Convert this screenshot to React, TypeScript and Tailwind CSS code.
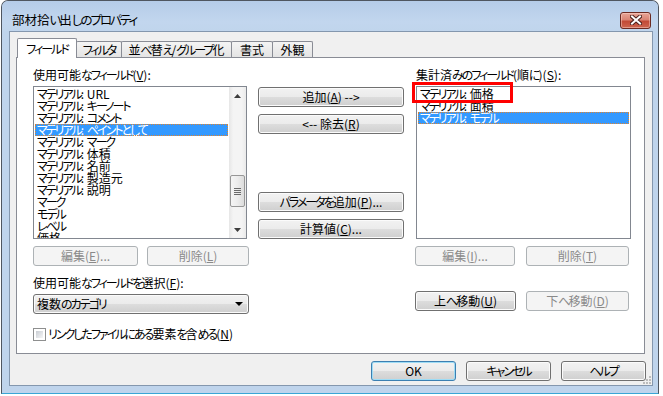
import React from "react";

const KANA = /[\u3041-\u30ff\uff61-\uff9f]/;

function T({ s }: { s: string }) {
  const parts: React.ReactNode[] = [];
  let buf = "";
  let isK: boolean | null = null;
  const flush = () => {
    if (!buf) return;
    parts.push(
      isK ? (
        <span key={parts.length} className="tracking-[-2px]">
          {buf}
        </span>
      ) : (
        <span key={parts.length}>{buf}</span>
      )
    );
    buf = "";
  };
  for (const ch of s) {
    const k = KANA.test(ch);
    if (isK !== null && k !== isK) flush();
    isK = k;
    buf += ch;
  }
  flush();
  return <>{parts}</>;
}

const U = ({ c }: { c: string }) => (
  <span className="underline decoration-1 underline-offset-[1px]">{c}</span>
);

type BtnProps = {
  children: React.ReactNode;
  className?: string;
  disabled?: boolean;
  primary?: boolean;
};

function Btn({ children, className = "", disabled = false, primary = false }: BtnProps) {
  let look =
    "border-[#707070] text-black bg-[linear-gradient(180deg,#f2f2f2_0%,#ebebeb_50%,#dddddd_50%,#cfcfcf_100%)] shadow-[inset_0_0_0_1px_#fbfbfb]";
  if (disabled) look = "border-[#adb2b5] text-[#8a8a8a] bg-[#f4f4f4]";
  if (primary)
    look =
      "border-[#3c7fb1] text-black bg-[linear-gradient(180deg,#f2f2f2_0%,#ebebeb_50%,#dddddd_50%,#cfcfcf_100%)] shadow-[inset_0_0_0_1px_#9edcf5]";
  return (
    <div
      className={`h-[20px] shrink-0 flex items-center justify-center rounded-[3px] border text-[12px] leading-[14px] whitespace-nowrap ${look} ${className}`}
    >
      {children}
    </div>
  );
}

function Tab({ s, className = "" }: { s: string; className?: string }) {
  return (
    <div
      className={`-ml-px h-[16px] flex items-center justify-center border border-b-0 border-[#898c95] rounded-t-[2px] bg-[linear-gradient(180deg,#f4f4f4_0%,#e4e4e4_100%)] leading-[14px] whitespace-nowrap ${className}`}
    >
      <T s={s} />
    </div>
  );
}

function Row({ s, selected = false }: { s: string; selected?: boolean }) {
  return (
    <div
      className={`h-[12px] leading-[12px] pl-[2px] whitespace-nowrap ${
        selected
          ? "bg-[#3399ff] text-white outline outline-1 outline-dotted outline-[#e0842f] -outline-offset-1"
          : ""
      }`}
    >
      <T s={s} />
    </div>
  );
}

function Arrow({ up }: { up: boolean }) {
  return (
    <div className="h-[17px] flex items-center justify-center">
      <svg width="7" height="4" viewBox="0 0 7 4">
        {up ? (
          <polygon points="3.5,0 7,4 0,4" fill="#3d3d3d" />
        ) : (
          <polygon points="0,0 7,0 3.5,4" fill="#3d3d3d" />
        )}
      </svg>
    </div>
  );
}

function Scrollbar() {
  return (
    <div className="w-[17px] h-full flex flex-col bg-[linear-gradient(90deg,#e6e6e6_0%,#f4f4f4_25%,#f4f4f4_75%,#eaeaea_100%)]">
      <Arrow up />
      <div className="flex-1">
        <div className="mt-[71px] mx-[1px] h-[32px] rounded-[2px] border border-[#979797] bg-[linear-gradient(90deg,#f5f5f5_0%,#ececec_50%,#dcdcdc_100%)] flex items-center justify-center">
          <svg width="7" height="7" viewBox="0 0 7 7">
            <rect x="0" y="0" width="7" height="1" fill="#6a6a6a" />
            <rect x="0" y="2" width="7" height="1" fill="#6a6a6a" />
            <rect x="0" y="4" width="7" height="1" fill="#6a6a6a" />
            <rect x="0" y="6" width="7" height="1" fill="#6a6a6a" />
          </svg>
        </div>
      </div>
      <Arrow up={false} />
    </div>
  );
}

function CloseButton() {
  return (
    <div className="w-[31px] h-[17px] shrink-0 rounded-[3px] border border-[#6b2a22] bg-[linear-gradient(180deg,#e7a597_0%,#d98474_45%,#c24a36_55%,#cd6650_100%)] shadow-[inset_0_0_0_1px_rgba(255,220,210,0.45)] flex items-center justify-center">
      <svg width="12" height="10" viewBox="0 0 12 10">
        <path d="M2 1.5 L10 8.5 M10 1.5 L2 8.5" stroke="#4a1f1a" strokeWidth="4" strokeLinecap="square" />
        <path d="M2 1.5 L10 8.5 M10 1.5 L2 8.5" stroke="#ffffff" strokeWidth="2" strokeLinecap="square" />
      </svg>
    </div>
  );
}

export default function App() {
  return (
    <div className="w-[663px] h-[396px] bg-white pl-[1px] overflow-hidden font-['Noto_Sans_CJK_JP','Noto_Sans',sans-serif] [font-feature-settings:'palt'] text-[12px] leading-[14px] text-black">
      <div className="w-[658px] h-[394px] flex flex-col rounded-t-[7px] border border-[#4f5660] border-b-[#3aa6d6] bg-[#bfd4ec]">
        {/* title bar */}
        <div className="h-[30px] shrink-0 flex items-center pl-[10px] pr-[7px] pt-[8px] rounded-t-[6px] bg-[linear-gradient(180deg,#b5cce8_0%,#c2d6ee_70%,#c0d5ec_100%)]">
          <span className="flex-1 text-[12.5px] leading-[16px] whitespace-nowrap">
            <T s="部材拾い出しのプロパティ" />
          </span>
          <CloseButton />
        </div>

        {/* client */}
        <div className="flex-1 flex pl-[7px] pr-[5px] pb-[7px]">
          <div className="relative flex-1 flex flex-col border border-[#8497ae] bg-[#f0f0f0] pt-[6px] pb-[4px]">
            {/* tabs */}
            <div className="h-[19px] flex items-end pl-[7px]">
              <div className="relative z-10 -mb-px h-[20px] w-[60px] flex items-center justify-center border border-b-0 border-[#898c95] rounded-t-[2px] bg-white leading-[14px]">
                <T s="フィールド" />
              </div>
              <Tab className="w-[46px]" s="フィルタ" />
              <Tab className="w-[111px]" s="並べ替え/グループ化" />
              <Tab className="w-[42px]" s="書式" />
              <Tab className="w-[41px]" s="外観" />
            </div>

            {/* tab panel */}
            <div className="ml-[6px] mr-[7px] h-[297px] border border-[#898c95] bg-white flex items-start pl-[16px] pt-[10px]">
              {/* left column */}
              <div className="w-[216px] flex flex-col">
                <div className="h-[14px] whitespace-nowrap">
                  <T s="使用可能なフィールド(" />
                  <U c="V" />
                  ):
                </div>
                <div className="mt-[4px] w-[214px] h-[153px] border border-[#828790] bg-white flex">
                  <div className="flex-1 overflow-hidden p-[1px]">
                    <Row s="マテリアル: URL" />
                    <Row s="マテリアル: キーノート" />
                    <Row s="マテリアル: コメント" />
                    <Row s="マテリアル: ペイントとして" selected />
                    <Row s="マテリアル: マーク" />
                    <Row s="マテリアル: 体積" />
                    <Row s="マテリアル: 名前" />
                    <Row s="マテリアル: 製造元" />
                    <Row s="マテリアル: 説明" />
                    <Row s="マーク" />
                    <Row s="モデル" />
                    <Row s="レベル" />
                    <Row s="価格" />
                  </div>
                  <Scrollbar />
                </div>
                <div className="mt-[7px] flex justify-between">
                  <Btn disabled className="w-[105px]">
                    編集(<U c="E" />)...
                  </Btn>
                  <Btn disabled className="w-[102px]">
                    削除(<U c="L" />)
                  </Btn>
                </div>
                <div className="mt-[10px] h-[14px] whitespace-nowrap">
                  <T s="使用可能なフィールドを選択(" />
                  <U c="F" />
                  ):
                </div>
                <div className="mt-[4px] h-[20px] w-[216px] rounded-[3px] border border-[#707070] bg-[linear-gradient(180deg,#f2f2f2_0%,#ebebeb_50%,#dddddd_50%,#cfcfcf_100%)] shadow-[inset_0_0_0_1px_#fbfbfb] flex items-center pl-[3px] pr-[5px]">
                  <span className="flex-1 whitespace-nowrap">
                    <T s="複数のカテゴリ" />
                  </span>
                  <svg width="8" height="4" viewBox="0 0 8 4">
                    <polygon points="0,0 8,0 4,4" fill="#000" />
                  </svg>
                </div>
                <div className="mt-[13px] h-[14px] flex items-center whitespace-nowrap">
                  <div className="w-[13px] h-[13px] shrink-0 border border-[#8e8f8f] bg-white p-[2px]">
                    <div className="w-full h-full bg-[linear-gradient(135deg,#c9cdd3_0%,#e4e6e9_60%,#f6f6f6_100%)]" />
                  </div>
                  <span className="ml-[2px]">
                    <T s="リンクしたファイルにある要素を含める(" />
                    <U c="N" />)
                  </span>
                </div>
              </div>

              {/* middle column */}
              <div className="ml-[9px] w-[146px] pt-[19px] flex flex-col">
                <Btn className="w-full">
                  追加(<U c="A" />){" -->"}
                </Btn>
                <Btn className="w-full mt-[7px]">
                  {"<-- 除去("}
                  <U c="R" />)
                </Btn>
                <Btn className="w-full mt-[58px]">
                  <T s="パラメータを追加(" />
                  <U c="P" />
                  )...
                </Btn>
                <Btn className="w-full mt-[7px]">
                  計算値(<U c="C" />)...
                </Btn>
              </div>

              {/* right column */}
              <div className="relative ml-[11px] w-[216px] flex flex-col">
                <div className="h-[14px] pl-[1px] whitespace-nowrap">
                  <T s="集計済みのフィールド(順に)(" />
                  <U c="S" />
                  ):
                </div>
                <div className="mt-[4px] ml-[1px] w-[215px] h-[153px] border border-[#828790] bg-white p-[1px] overflow-hidden">
                  <Row s="マテリアル: 価格" />
                  <Row s="マテリアル: 面積" />
                  <Row s="マテリアル: モデル" selected />
                </div>
                <div className="mt-[7px] flex">
                  <Btn disabled className="w-[100px]">
                    編集(<U c="I" />)...
                  </Btn>
                  <Btn disabled className="w-[103px] ml-[11px]">
                    削除(<U c="T" />)
                  </Btn>
                </div>
                <div className="mt-[25px] flex">
                  <Btn className="w-[101px]">
                    <T s="上へ移動(" />
                    <U c="U" />)
                  </Btn>
                  <Btn disabled className="w-[103px] ml-[10px]">
                    <T s="下へ移動(" />
                    <U c="D" />)
                  </Btn>
                </div>
                <div className="absolute left-[-3px] top-[14px] w-[101px] h-[21px] border-[3px] border-[#ff0000]" />
              </div>
            </div>

            {/* dialog buttons */}
            <div className="mt-[7px] flex justify-end gap-[10px] pr-[6px]">
              <Btn primary className="w-[85px]">
                OK
              </Btn>
              <Btn className="w-[85px]">
                <T s="キャンセル" />
              </Btn>
              <Btn className="w-[85px]">
                <T s="ヘルプ" />
              </Btn>
            </div>

            {/* size grip */}
            <svg className="absolute right-0 bottom-0" width="10" height="10" viewBox="0 0 10 10">
              <rect x="7" y="1" width="2" height="2" fill="#bcbcbc" />
              <rect x="4" y="4" width="2" height="2" fill="#bcbcbc" />
              <rect x="7" y="4" width="2" height="2" fill="#bcbcbc" />
              <rect x="1" y="7" width="2" height="2" fill="#bcbcbc" />
              <rect x="4" y="7" width="2" height="2" fill="#bcbcbc" />
              <rect x="7" y="7" width="2" height="2" fill="#bcbcbc" />
            </svg>
          </div>
        </div>
      </div>
    </div>
  );
}
